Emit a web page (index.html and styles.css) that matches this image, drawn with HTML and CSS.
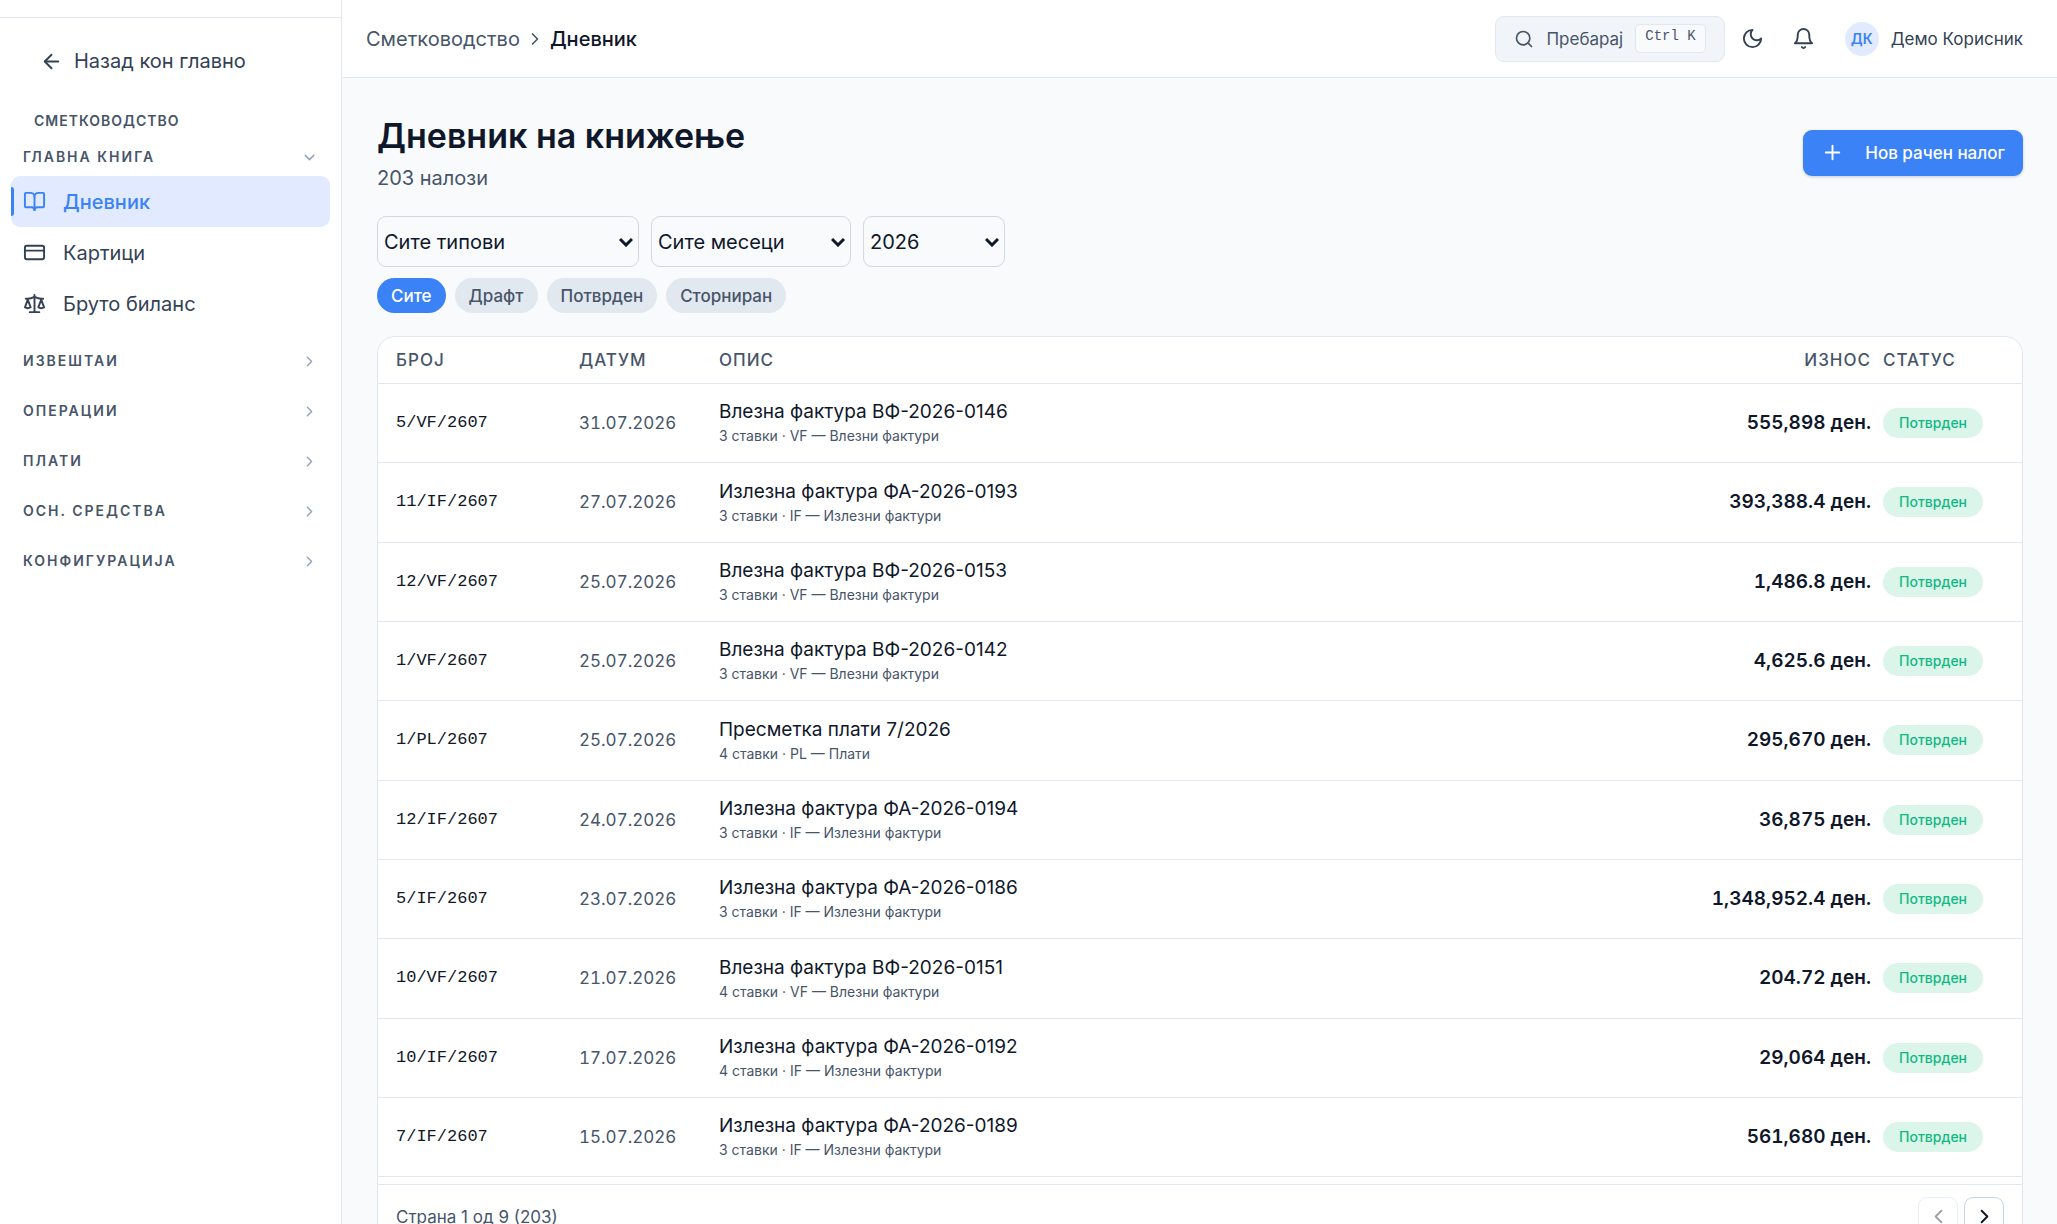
FILE: index.html
```html
<!DOCTYPE html>
<html lang="mk">
<head>
	<meta charset="UTF-8">
	<meta name="viewport" content="width=device-width, initial-scale=1">
	<title>Дневник</title>
	<link rel="stylesheet" href="styles.css">
</head>
<body>
	<div class="app">
		<aside class="sidebar">
			<div class="sidebar-top"></div>
			<a class="back" href="#">
				<svg class="icon" viewBox="0 0 24 24"><path d="m12 19-7-7 7-7"/><path d="M19 12H5"/></svg>
				Назад кон главно
			</a>
			<div class="sidebar-title">Сметководство</div>
			<nav>
				<button class="section open" type="button">Главна книга
					<svg class="icon" viewBox="0 0 24 24"><path d="m6 9 6 6 6-6"/></svg>
				</button>
				<a class="item active" href="#">
					<svg class="icon" viewBox="0 0 24 24"><path d="M12 7v14"/><path d="M3 18a1 1 0 0 1-1-1V4a1 1 0 0 1 1-1h5a4 4 0 0 1 4 4 4 4 0 0 1 4-4h5a1 1 0 0 1 1 1v13a1 1 0 0 1-1 1h-6a3 3 0 0 0-3 3 3 3 0 0 0-3-3z"/></svg>
					Дневник
				</a>
				<a class="item" href="#">
					<svg class="icon" viewBox="0 0 24 24"><rect x="2" y="5" width="20" height="14" rx="2"/><path d="M2 10h20"/></svg>
					Картици
				</a>
				<a class="item" href="#">
					<svg class="icon" viewBox="0 0 24 24"><path d="m16 16 3-8 3 8c-.87.65-1.92 1-3 1s-2.130-.35-3-1Z"/><path d="m2 16 3-8 3 8c-.87.65-1.92 1-3 1s-2.130-.35-3-1Z"/><path d="M7 21h10"/><path d="M12 3v18"/><path d="M3 7h2c2 0 5-1 7-2 2 1 5 2 7 2h2"/></svg>
					Бруто биланс
				</a>
				<button class="section" type="button">Извештаи
					<svg class="icon" viewBox="0 0 24 24"><path d="m9 18 6-6-6-6"/></svg>
				</button>
				<button class="section" type="button">Операции
					<svg class="icon" viewBox="0 0 24 24"><path d="m9 18 6-6-6-6"/></svg>
				</button>
				<button class="section" type="button">Плати
					<svg class="icon" viewBox="0 0 24 24"><path d="m9 18 6-6-6-6"/></svg>
				</button>
				<button class="section" type="button">Осн. средства
					<svg class="icon" viewBox="0 0 24 24"><path d="m9 18 6-6-6-6"/></svg>
				</button>
				<button class="section" type="button">Конфигурација
					<svg class="icon" viewBox="0 0 24 24"><path d="m9 18 6-6-6-6"/></svg>
				</button>
			</nav>
		</aside>

		<div class="main">
			<header class="topbar">
				<div class="breadcrumb">
					<a href="#">Сметководство</a>
					<svg class="icon" viewBox="0 0 24 24"><path d="m9 18 6-6-6-6"/></svg>
					<span class="current">Дневник</span>
				</div>
				<div class="tools">
					<button class="search" type="button">
						<svg class="icon" viewBox="0 0 24 24"><circle cx="11" cy="11" r="8"/><path d="m21 21-4.300-4.300"/></svg>
						Пребарај
						<kbd>Ctrl K</kbd>
					</button>
					<button class="icon-button" type="button" aria-label="Тема">
						<svg class="icon" viewBox="0 0 24 24"><path d="M12 3a6 6 0 0 0 9 9 9 9 0 1 1-9-9Z"/></svg>
					</button>
					<button class="icon-button" type="button" aria-label="Известувања">
						<svg class="icon" viewBox="0 0 24 24"><path d="M6 8a6 6 0 0 1 12 0c0 7 3 9 3 9H3s3-2 3-9"/><path d="M10.300 21a1.940 1.940 0 0 0 3.400 0"/></svg>
					</button>
					<button class="user" type="button">
						<span class="avatar">ДК</span>
						Демо Корисник
					</button>
				</div>
			</header>

			<main class="content">
				<div class="page-head">
					<div>
						<h1>Дневник на книжење</h1>
						<p class="count">203 налози</p>
					</div>
					<button class="primary" type="button">
						<svg class="icon" viewBox="0 0 24 24"><path d="M5 12h14"/><path d="M12 5v14"/></svg>
						Нов рачен налог
					</button>
				</div>

				<div class="filters">
					<select class="type" aria-label="Тип"><option>Сите типови</option></select>
					<select class="month" aria-label="Месец"><option>Сите месеци</option></select>
					<select class="year" aria-label="Година"><option>2026</option></select>
				</div>
				<div class="chips">
					<button class="chip selected" type="button">Сите</button>
					<button class="chip" type="button">Драфт</button>
					<button class="chip" type="button">Потврден</button>
					<button class="chip" type="button">Сторниран</button>
				</div>

				<div class="card">
					<table class="journal">
						<thead>
							<tr>
								<th class="number">Број</th>
								<th class="date">Датум</th>
								<th>Опис</th>
								<th class="amount">Износ</th>
								<th class="status">Статус</th>
							</tr>
						</thead>
						<tbody>
							<tr>
								<td class="number">5/VF/2607</td>
								<td class="date">31.07.2026</td>
								<td><div class="title">Влезна фактура ВФ-2026-0146</div><div class="sub">3 ставки · VF — Влезни фактури</div></td>
								<td class="amount">555,898 ден.</td>
								<td class="status"><span class="badge">Потврден</span></td>
							</tr>
							<tr>
								<td class="number">11/IF/2607</td>
								<td class="date">27.07.2026</td>
								<td><div class="title">Излезна фактура ФА-2026-0193</div><div class="sub">3 ставки · IF — Излезни фактури</div></td>
								<td class="amount">393,388.4 ден.</td>
								<td class="status"><span class="badge">Потврден</span></td>
							</tr>
							<tr>
								<td class="number">12/VF/2607</td>
								<td class="date">25.07.2026</td>
								<td><div class="title">Влезна фактура ВФ-2026-0153</div><div class="sub">3 ставки · VF — Влезни фактури</div></td>
								<td class="amount">1,486.8 ден.</td>
								<td class="status"><span class="badge">Потврден</span></td>
							</tr>
							<tr>
								<td class="number">1/VF/2607</td>
								<td class="date">25.07.2026</td>
								<td><div class="title">Влезна фактура ВФ-2026-0142</div><div class="sub">3 ставки · VF — Влезни фактури</div></td>
								<td class="amount">4,625.6 ден.</td>
								<td class="status"><span class="badge">Потврден</span></td>
							</tr>
							<tr>
								<td class="number">1/PL/2607</td>
								<td class="date">25.07.2026</td>
								<td><div class="title">Пресметка плати 7/2026</div><div class="sub">4 ставки · PL — Плати</div></td>
								<td class="amount">295,670 ден.</td>
								<td class="status"><span class="badge">Потврден</span></td>
							</tr>
							<tr>
								<td class="number">12/IF/2607</td>
								<td class="date">24.07.2026</td>
								<td><div class="title">Излезна фактура ФА-2026-0194</div><div class="sub">3 ставки · IF — Излезни фактури</div></td>
								<td class="amount">36,875 ден.</td>
								<td class="status"><span class="badge">Потврден</span></td>
							</tr>
							<tr>
								<td class="number">5/IF/2607</td>
								<td class="date">23.07.2026</td>
								<td><div class="title">Излезна фактура ФА-2026-0186</div><div class="sub">3 ставки · IF — Излезни фактури</div></td>
								<td class="amount">1,348,952.4 ден.</td>
								<td class="status"><span class="badge">Потврден</span></td>
							</tr>
							<tr>
								<td class="number">10/VF/2607</td>
								<td class="date">21.07.2026</td>
								<td><div class="title">Влезна фактура ВФ-2026-0151</div><div class="sub">4 ставки · VF — Влезни фактури</div></td>
								<td class="amount">204.72 ден.</td>
								<td class="status"><span class="badge">Потврден</span></td>
							</tr>
							<tr>
								<td class="number">10/IF/2607</td>
								<td class="date">17.07.2026</td>
								<td><div class="title">Излезна фактура ФА-2026-0192</div><div class="sub">4 ставки · IF — Излезни фактури</div></td>
								<td class="amount">29,064 ден.</td>
								<td class="status"><span class="badge">Потврден</span></td>
							</tr>
							<tr>
								<td class="number">7/IF/2607</td>
								<td class="date">15.07.2026</td>
								<td><div class="title">Излезна фактура ФА-2026-0189</div><div class="sub">3 ставки · IF — Излезни фактури</div></td>
								<td class="amount">561,680 ден.</td>
								<td class="status"><span class="badge">Потврден</span></td>
							</tr>
						</tbody>
					</table>
					<div class="pager">
						<span>Страна 1 од 9 (203)</span>
						<div class="pager-buttons">
							<button type="button" aria-label="Претходна" disabled>
								<svg class="icon" viewBox="0 0 24 24"><path d="m15 18-6-6 6-6"/></svg>
							</button>
							<button type="button" aria-label="Следна">
								<svg class="icon" viewBox="0 0 24 24"><path d="m9 18 6-6-6-6"/></svg>
							</button>
						</div>
					</div>
				</div>
			</main>
		</div>
	</div>
</body>
</html>
```
FILE: styles.css
```css
* {
	box-sizing: border-box;
}
body {
	margin: 0;
	font-family: Inter, "Liberation Sans", sans-serif;
	font-size: 20px;
	line-height: 28px;
	color: #0f172a;
	background-color: #f8fafc;
}
button, select {
	font: inherit;
	color: inherit;
}
button {
	display: flex;
	align-items: center;
	padding: 0;
	border: 0;
	background: none;
	cursor: pointer;
}
a {
	color: inherit;
	text-decoration: none;
}
.icon {
	width: 23px;
	height: 23px;
	flex: none;
	fill: none;
	stroke: currentColor;
	stroke-width: 2;
	stroke-linecap: round;
	stroke-linejoin: round;
}
.app {
	display: flex;
	height: 100vh;
	overflow: hidden;
}

/* sidebar */
.sidebar {
	width: 342px;
	flex: none;
	background-color: white;
	border-right: 1px solid #e2e8f0;
	color: #334155;
}
.sidebar-top {
	height: 18px;
	border-bottom: 1px solid #e2e8f0;
}
.back {
	display: flex;
	align-items: center;
	gap: 11px;
	margin: 20px 11px 0 28px;
	padding: 9px 12px;
}
.sidebar-title,
.section {
	font-size: 14px;
	line-height: 20px;
	font-weight: 600;
	letter-spacing: 1px;
	text-transform: uppercase;
	color: #475569;
}
.sidebar-title {
	padding: 27px 34px 0;
}
nav {
	padding: 7px 11px;
}
.section {
	width: 100%;
	height: 38px;
	margin-top: 12px;
	padding: 0 12px;
	justify-content: space-between;
	letter-spacing: 2px;
}
.section.open {
	margin-top: 0;
}
.item + .section {
	margin-top: 13px;
}
.section .icon {
	width: 17px;
	height: 17px;
	color: #94a3b8;
}
.item {
	display: flex;
	align-items: center;
	gap: 17px;
	height: 51px;
	padding: 0 12px;
	border-radius: 9px;
}
.item.active {
	position: relative;
	color: #3b82f6;
	background-color: #e1eafe;
	font-weight: 500;
}
.item.active::before {
	content: "";
	position: absolute;
	left: 0;
	top: 11px;
	bottom: 11px;
	width: 3px;
	border-radius: 0 3px 3px 0;
	background-color: #3b82f6;
}

/* top bar */
.main {
	flex: 1;
	min-width: 0;
}
.topbar {
	display: flex;
	align-items: center;
	justify-content: space-between;
	height: 78px;
	padding: 0 34px 0 24px;
	background-color: white;
	border-bottom: 1px solid #e2e8f0;
}
.breadcrumb {
	display: flex;
	align-items: center;
	gap: 5px;
	color: #475569;
}
.breadcrumb .icon {
	width: 20px;
	height: 20px;
}
.breadcrumb .current {
	font-weight: 500;
	color: #0f172a;
}
.tools {
	display: flex;
	align-items: center;
	font-size: 17px;
	color: #334155;
}
.search {
	height: 46px;
	gap: 12px;
	padding: 0 18px;
	border: 1px solid #e2e8f0;
	border-radius: 9px;
	background-color: #f1f5f9;
	color: #475569;
}
.search .icon {
	width: 20px;
	height: 20px;
}
kbd {
	height: 29px;
	padding: 0 9px;
	border: 1px solid #e2e8f0;
	border-radius: 5px;
	background-color: #f8fafc;
	font-family: "Liberation Mono", monospace;
	font-size: 14px;
	line-height: 22px;
}
.icon-button {
	width: 46px;
	height: 46px;
	margin-left: 5px;
	justify-content: center;
}
.user {
	gap: 12px;
	margin-left: 18px;
}
.avatar {
	width: 34px;
	height: 34px;
	border-radius: 50%;
	background-color: #e1eafe;
	color: #3b82f6;
	font-size: 14px;
	line-height: 34px;
	font-weight: 600;
	text-align: center;
}

/* page */
.content {
	padding: 35px 34px 0 35px;
}
.page-head {
	display: flex;
	align-items: center;
	justify-content: space-between;
}
h1 {
	margin: 0;
	font-size: 34px;
	line-height: 46px;
	font-weight: 600;
}
.count {
	margin: 5px 0 0;
	color: #475569;
}
.primary {
	height: 46px;
	gap: 21px;
	padding: 0 18px;
	border-radius: 9px;
	background-color: #3b82f6;
	color: white;
	font-size: 17px;
	font-weight: 500;
	box-shadow: 0 1px 3px rgba(15, 23, 42, 0.2);
}
.filters {
	display: flex;
	gap: 12px;
	margin-top: 24px;
}
.filters select {
	height: 51px;
	padding: 0 6px;
	border: 1px solid #d4d8de;
	border-radius: 9px;
	appearance: none;
	background: #f8fafc url("data:image/svg+xml,%3Csvg xmlns='http://www.w3.org/2000/svg' viewBox='0 0 14 10'%3E%3Cpath d='M1 2l6 6 6-6' fill='none' stroke='%230f172a' stroke-width='3'/%3E%3C/svg%3E") no-repeat right 5px center / 14px 10px;
}
.filters .type {
	width: 262px;
}
.filters .month {
	width: 200px;
}
.filters .year {
	width: 142px;
}
.chips {
	display: flex;
	gap: 9px;
	margin-top: 11px;
}
.chip {
	height: 35px;
	padding: 0 14px;
	border-radius: 18px;
	background-color: #e2e8f0;
	color: #475569;
	font-size: 17px;
	font-weight: 500;
}
.chip.selected {
	background-color: #3b82f6;
	color: white;
}

/* journal table */
.card {
	margin-top: 23px;
	border: 1px solid #e2e8f0;
	border-radius: 18px;
	background-color: white;
}
.journal {
	width: 100%;
	border-collapse: collapse;
}
.journal th,
.journal td {
	padding: 0;
	text-align: left;
	border-bottom: 1px solid #e2e8f0;
}
.journal th {
	height: 46px;
	font-size: 17px;
	font-weight: 500;
	letter-spacing: 1px;
	text-transform: uppercase;
	color: #475569;
}
.journal td {
	height: 79px;
}
.journal tr:nth-child(3n+2) td {
	height: 80px;
}
.journal .number {
	width: 201px;
	padding-left: 18px;
}
.journal td.number {
	font-family: "Liberation Mono", monospace;
	font-size: 17px;
}
.journal .date {
	width: 140px;
}
.journal td.date {
	font-size: 17px;
	font-variant-numeric: tabular-nums;
	color: #475569;
}
.journal .title {
	font-size: 19px;
	line-height: 27px;
}
.journal .sub {
	font-size: 14px;
	line-height: 22px;
	color: #475569;
}
.journal .amount {
	padding-right: 12px;
	text-align: right;
}
.journal td.amount {
	font-size: 19px;
	font-weight: 600;
	font-variant-numeric: tabular-nums;
}
.journal .status {
	width: 139px;
}
.badge {
	display: inline-block;
	padding: 0 16px;
	border-radius: 15px;
	background-color: #dbf5eb;
	color: #10b981;
	font-size: 14px;
	line-height: 30px;
	font-weight: 500;
	vertical-align: middle;
}
.pager {
	display: flex;
	align-items: center;
	justify-content: space-between;
	margin-top: 7px;
	padding: 12px 18px;
	border-top: 1px solid #e2e8f0;
	font-size: 17px;
	color: #475569;
}
.pager-buttons {
	display: flex;
	gap: 6px;
}
.pager-buttons button {
	width: 40px;
	height: 40px;
	justify-content: center;
	border: 1px solid #cbd5e1;
	border-radius: 9px;
	color: #0f172a;
}
.pager-buttons button:disabled {
	opacity: 0.4;
}
```
